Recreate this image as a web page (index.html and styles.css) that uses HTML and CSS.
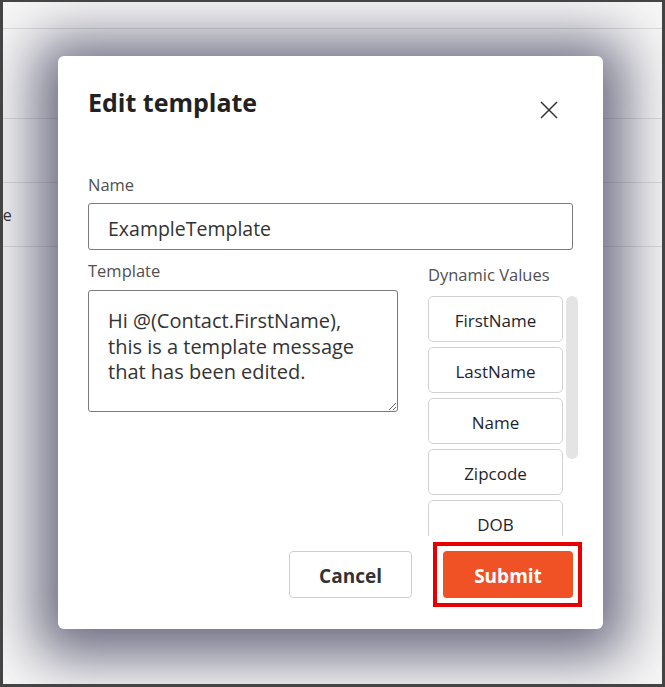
FILE: index.html
```html
<!DOCTYPE html>
<html lang="en">
<head>
    <meta charset="UTF-8">
    <meta name="viewport" content="width=device-width, initial-scale=1.0">
    <title>Edit template</title>
    <link rel="stylesheet" href="styles.css">
</head>

<body>
    <div class="frame">
        <!-- Page behind the dialog -->
        <div class="page">
            <div class="page-row row-top"></div>
            <div class="page-row row-head"></div>
            <div class="page-row row-item"></div>
            <div class="page-row row-item"><span class="cell">Name</span></div>
        </div>

        <!-- Dialog -->
        <div class="modal">
            <div class="modal-header">
                <h1>Edit template</h1>
                <button class="close-btn" aria-label="Close">
                    <svg width="18" height="18" viewBox="0 0 18 18">
                        <path d="M1 1 L17 17 M17 1 L1 17" stroke="#333" stroke-width="1.5" fill="none"/>
                    </svg>
                </button>
            </div>

            <div class="field">
                <label for="name">Name</label>
                <input type="text" id="name" value="ExampleTemplate">
            </div>

            <div class="template-row">
                <div class="field template-field">
                    <label for="template">Template</label>
                    <textarea id="template">Hi @(Contact.FirstName),
this is a template message
that has been edited.</textarea>
                </div>

                <div class="dynamic">
                    <div class="dynamic-label">Dynamic Values</div>
                    <div class="dynamic-body">
                        <div class="dynamic-list">
                            <button class="value-btn">FirstName</button>
                            <button class="value-btn">LastName</button>
                            <button class="value-btn">Name</button>
                            <button class="value-btn">Zipcode</button>
                            <button class="value-btn">DOB</button>
                            <button class="value-btn">Email</button>
                            <button class="value-btn">Phone</button>
                        </div>
                        <div class="scroll-thumb"></div>
                    </div>
                </div>
            </div>

            <div class="modal-footer">
                <button class="btn btn-cancel">Cancel</button>
                <button class="btn btn-submit">Submit</button>
            </div>
        </div>
    </div>
</body>
</html>
```

FILE: styles.css
```css
/* General Reset */
* {
    margin: 0;
    padding: 0;
    box-sizing: border-box;
    font-family: 'Open Sans', 'Noto Sans', sans-serif;
}

body {
    background: #444;
}

/* Screen frame */
.frame {
    position: relative;
    width: 665px;
    height: 687px;
    border: 3px solid #444;
    border-top-width: 2px;
    background: #f7f7f7;
    overflow: hidden;
}

/* Page behind */
.page-row {
    border-bottom: 1px solid #dcdcdc;
    display: flex;
    align-items: center;
}

.row-top {
    height: 27px;
}

.row-head {
    height: 90px;
}

.row-item {
    height: 64px;
}

.cell {
    margin-left: -36px;
    font-size: 16px;
    color: #333;
}

/* Dialog */
.modal {
    position: absolute;
    left: 55px;
    top: 54px;
    width: 545px;
    height: 573px;
    background: #fff;
    border-radius: 6px;
    padding: 30px 30px 31px;
    box-shadow: 0 6px 56px 22px rgba(60, 58, 88, 0.74);
    display: flex;
    flex-direction: column;
}

.modal-header {
    display: flex;
    justify-content: space-between;
    align-items: flex-start;
    height: 32px;
    margin-bottom: 56px;
}

h1 {
    font-size: 25px;
    line-height: 32px;
    font-weight: 700;
    color: #222;
}

.close-btn {
    background: none;
    border: none;
    width: 18px;
    height: 18px;
    margin-top: 15px;
    margin-right: 15px;
    cursor: pointer;
}

.close-btn svg {
    display: block;
}

/* Fields */
label, .dynamic-label {
    display: block;
    font-size: 16.5px;
    line-height: 22px;
    color: #505050;
}

.field label {
    margin-bottom: 7px;
}

input, textarea {
    width: 100%;
    border: 1px solid #7a7a7a;
    border-radius: 3px;
    background: #fff;
    color: #333;
    font-size: 19.5px;
}

input {
    height: 47px;
    padding: 3px 19px 0;
}

.template-row {
    display: flex;
    gap: 30px;
    margin-top: 10px;
}

.template-field {
    flex: 0 0 310px;
}

.template-field label {
    margin-bottom: 8px;
}

textarea {
    height: 122px;
    padding: 17px 19px;
    font-size: 20px;
    line-height: 25.5px;
    resize: vertical;
}

/* Dynamic values */
.dynamic {
    flex: 0 0 150px;
    padding-top: 4px;
}

.dynamic-label {
    margin-bottom: 10px;
}

.dynamic-body {
    display: flex;
    gap: 3px;
    align-items: flex-start;
}

.dynamic-list {
    height: 240px;
    overflow: hidden;
    display: flex;
    flex-direction: column;
    gap: 5px;
}

.scroll-thumb {
    width: 12px;
    height: 163px;
    background: #e4e4e4;
    border-radius: 6px;
}

.value-btn {
    flex: 0 0 46px;
    width: 135px;
    padding-top: 2px;
    background: #fff;
    border: 1px solid #d2d2d2;
    border-radius: 5px;
    font-size: 17px;
    color: #1f1f2e;
    cursor: pointer;
}

/* Footer */
.modal-footer {
    margin-top: auto;
    display: flex;
    justify-content: flex-end;
    gap: 31px;
}

.btn {
    height: 47px;
    padding-top: 3px;
    border-radius: 4px;
    font-size: 19px;
    font-weight: 700;
    cursor: pointer;
}

.btn-cancel {
    width: 123px;
    background: #fff;
    border: 1px solid #cfcfcf;
    color: #333;
}

.btn-submit {
    position: relative;
    width: 130px;
    background: #f05125;
    border: none;
    color: #fff;
}

/* Highlight box drawn over the submit button */
.btn-submit::after {
    content: "";
    position: absolute;
    top: -9px;
    left: -10px;
    right: -9px;
    bottom: -9px;
    border: 4px solid #e60000;
}
```
